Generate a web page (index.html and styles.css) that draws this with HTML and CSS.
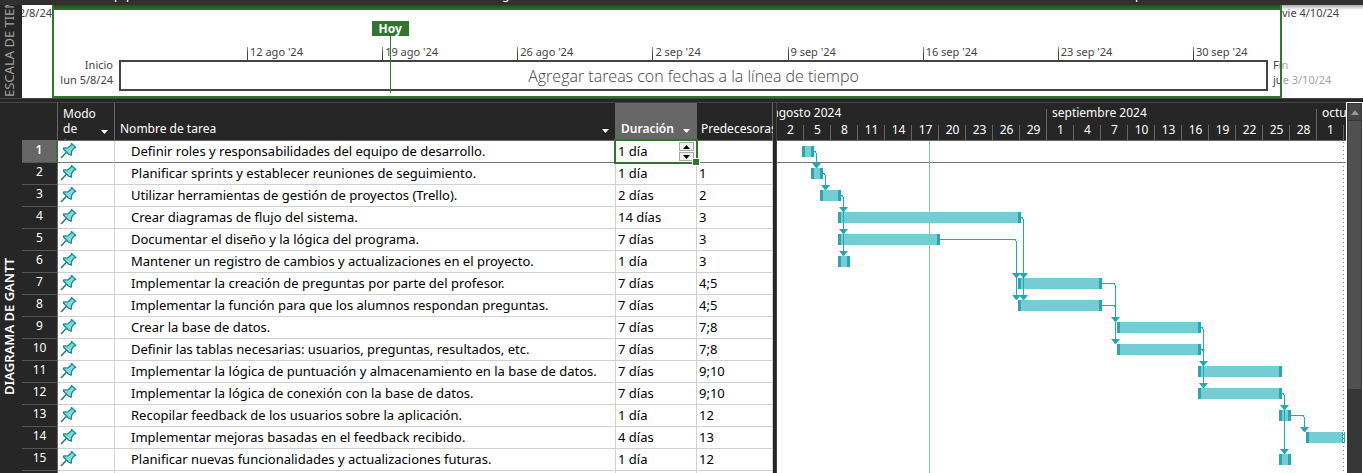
FILE: index.html
```
<!DOCTYPE html>
<html lang="es">
<head>
<meta charset="utf-8">
<title>Diagrama de Gantt</title>
<link rel="stylesheet" href="styles.css">
</head>
<body>
<svg class="defs" width="0" height="0" aria-hidden="true">
  <symbol id="pin" viewBox="0 0 17 17">
    <path d="M1 16 6.2 10.4" fill="none" stroke="#14838c" stroke-width="1.5"/>
    <path d="M11.5 1.5 15.8 5.4 13.8 6.2 11.6 9.3 11.2 13.3 8.7 12.2 3.4 7 3.8 5.8 7.6 6 11 3.2Z" fill="#7fdcdc" stroke="#14838c" stroke-width="1.2" stroke-linejoin="round"/>
  </symbol>
  <symbol id="caret" viewBox="0 0 7 4"><path d="M0 0H7L3.500 4Z" fill="#fff"/></symbol>
  <marker id="arrow" viewBox="0 0 9 5" refX="4.500" refY="4" markerWidth="9" markerHeight="5" markerUnits="userSpaceOnUse"><path d="M0 0H9L5 5H4Z" fill="#1aacb9"/></marker>
</svg>
<header class="ribbon"><span class="r1">p</span><span class="r2">p</span><span class="r3">g</span><span class="r4">p</span></header>

<section class="timeline">
  <h2 class="rail rail-dim">ESCALA DE TIEMPO</h2>
  <div class="outside before">2/8/24</div>
  <div class="frame">
    <div class="edge start">Inicio<br>lun 5/8/24</div>
    <div class="scale">
      <div class="weeks">
        <span>12 ago '24</span><span>19 ago '24</span><span>26 ago '24</span><span>2 sep '24</span><span>9 sep '24</span><span>16 sep '24</span><span>23 sep '24</span><span class="last">30 sep '24</span>
      </div>
      <div class="drop">Agregar tareas con fechas a la línea de tiempo</div>
      <div class="today"><b>Hoy</b><i></i></div>
    </div>
    <div class="edge end">Fin<br>jue 3/10/24</div>
  </div>
  <div class="outside after">vie 4/10/24</div>
</section>
<div class="splitter"></div>

<main class="gantt">
  <h2 class="rail rail-main">DIAGRAMA DE GANTT</h2>
  <table class="tasks">
    <colgroup><col class="c-id"><col class="c-mode"><col class="c-name"><col class="c-dur"><col class="c-pred"></colgroup>
    <thead>
      <tr>
        <th></th>
        <th><div class="head tall"><span>Modo de tarea</span><svg class="caret"><use href="#caret"/></svg></div></th>
        <th><div class="head"><span>Nombre de tarea</span><svg class="caret"><use href="#caret"/></svg></div></th>
        <th class="picked"><div class="head"><span>Duración</span><svg class="caret"><use href="#caret"/></svg></div></th>
        <th><div class="head"><span>Predecesoras</span></div></th>
      </tr>
    </thead>
    <tbody>
      <tr class="current"><th>1</th><td><svg class="pin"><use href="#pin"/></svg></td><td>Definir roles y responsabilidades del equipo de desarrollo.</td><td class="editing"><div class="editor"><input type="text" value="1 día" aria-label="Duración"><div class="spin"><button aria-label="Aumentar"><svg width="7" height="4"><path d="M0 4 3.500 0 7 4Z"/></svg></button><button aria-label="Disminuir"><svg width="7" height="4"><path d="M0 0H7L3.500 4Z"/></svg></button></div></div></td><td></td></tr>
      <tr><th>2</th><td><svg class="pin"><use href="#pin"/></svg></td><td>Planificar sprints y establecer reuniones de seguimiento.</td><td>1 día</td><td>1</td></tr>
      <tr><th>3</th><td><svg class="pin"><use href="#pin"/></svg></td><td>Utilizar herramientas de gestión de proyectos (Trello).</td><td>2 días</td><td>2</td></tr>
      <tr><th>4</th><td><svg class="pin"><use href="#pin"/></svg></td><td>Crear diagramas de flujo del sistema.</td><td>14 días</td><td>3</td></tr>
      <tr><th>5</th><td><svg class="pin"><use href="#pin"/></svg></td><td>Documentar el diseño y la lógica del programa.</td><td>7 días</td><td>3</td></tr>
      <tr><th>6</th><td><svg class="pin"><use href="#pin"/></svg></td><td>Mantener un registro de cambios y actualizaciones en el proyecto.</td><td>1 día</td><td>3</td></tr>
      <tr><th>7</th><td><svg class="pin"><use href="#pin"/></svg></td><td>Implementar la creación de preguntas por parte del profesor.</td><td>7 días</td><td>4;5</td></tr>
      <tr><th>8</th><td><svg class="pin"><use href="#pin"/></svg></td><td>Implementar la función para que los alumnos respondan preguntas.</td><td>7 días</td><td>4;5</td></tr>
      <tr><th>9</th><td><svg class="pin"><use href="#pin"/></svg></td><td>Crear la base de datos.</td><td>7 días</td><td>7;8</td></tr>
      <tr><th>10</th><td><svg class="pin"><use href="#pin"/></svg></td><td>Definir las tablas necesarias: usuarios, preguntas, resultados, etc.</td><td>7 días</td><td>7;8</td></tr>
      <tr><th>11</th><td><svg class="pin"><use href="#pin"/></svg></td><td>Implementar la lógica de puntuación y almacenamiento en la base de datos.</td><td>7 días</td><td>9;10</td></tr>
      <tr><th>12</th><td><svg class="pin"><use href="#pin"/></svg></td><td>Implementar la lógica de conexión con la base de datos.</td><td>7 días</td><td>9;10</td></tr>
      <tr><th>13</th><td><svg class="pin"><use href="#pin"/></svg></td><td>Recopilar feedback de los usuarios sobre la aplicación.</td><td>1 día</td><td>12</td></tr>
      <tr><th>14</th><td><svg class="pin"><use href="#pin"/></svg></td><td>Implementar mejoras basadas en el feedback recibido.</td><td>4 días</td><td>13</td></tr>
      <tr><th>15</th><td><svg class="pin"><use href="#pin"/></svg></td><td>Planificar nuevas funcionalidades y actualizaciones futuras.</td><td>1 día</td><td>12</td></tr>
      <tr><th></th><td></td><td></td><td></td><td></td></tr>
    </tbody>
  </table>

  <div class="chart">
    <div class="calendar">
      <div class="months"><span class="ago">agosto 2024</span><span class="sep">septiembre 2024</span><span class="oct">octubre 2024</span></div>
      <div class="days"><span>2</span><span>5</span><span>8</span><span>11</span><span>14</span><span>17</span><span>20</span><span>23</span><span>26</span><span class="eom">29</span><span>1</span><span>4</span><span>7</span><span>10</span><span>13</span><span>16</span><span>19</span><span>22</span><span>25</span><span class="eom">28</span><span>1</span></div>
    </div>
    <svg class="bars" role="img" aria-label="Barras de tareas" shape-rendering="crispEdges">
      <path d="M0 21.500H569" stroke="#777"/>
      <path d="M152.500 0V332" stroke="#8fc18f"/>
      <g fill="#74cdd4">
        <path d="M25 5h12v11h-12zM34 27h12v11h-12zM43 49h21v11h-21zM61 71h183v11h-183zM61 93h102v11h-102zM61 115h12v11h-12zM241 137h84v11h-84zM241 159h84v11h-84zM340 181h84v11h-84zM340 203h84v11h-84zM421 225h84v11h-84zM421 247h84v11h-84zM502 269h12v11h-12zM529 291h38v11h-38zM502 313h12v11h-12z"/>
      </g>
      <g fill="#2ba5b0">
        <path d="M25 5h3v11h-3zM34 5h3v11h-3zM34 27h3v11h-3zM43 27h3v11h-3zM43 49h3v11h-3zM61 49h3v11h-3zM61 71h3v11h-3zM241 71h3v11h-3zM61 93h3v11h-3zM160 93h3v11h-3zM61 115h3v11h-3zM70 115h3v11h-3zM241 137h3v11h-3zM322 137h3v11h-3zM241 159h3v11h-3zM322 159h3v11h-3zM340 181h3v11h-3zM421 181h3v11h-3zM340 203h3v11h-3zM421 203h3v11h-3zM421 225h3v11h-3zM502 225h3v11h-3zM421 247h3v11h-3zM502 247h3v11h-3zM502 269h3v11h-3zM511 269h3v11h-3zM529 291h3v11h-3zM565 291h1v11h-1zM567 291h1v11h-1zM502 313h3v11h-3zM511 313h3v11h-3z"/>
      </g>
      <path d="M566.500 291V302" stroke="#fff"/>
      <path d="M566.500 1V332" stroke="#777" stroke-dasharray="1 3"/>
      <g class="links" fill="none" stroke="#1aacb9">
        <path d="M37 10.500h1l1.500 2V26"/>
        <path d="M46 32.500h1l1.500 2V48"/>
        <path d="M64 54.500h1l1.500 2V70"/>
        <path d="M66.500 70V92"/>
        <path d="M66.500 92V114"/>
        <path d="M244 76.500h1l1.500 2V136"/>
        <path d="M246.500 136V158"/>
        <path d="M163 98.500h75l1.500 2V136"/>
        <path d="M239.500 136V158"/>
        <path d="M325 142.500h12l1.500 2V180"/>
        <path d="M325 164.500h12l1.500 2V202"/>
        <path d="M424 186.500h1l1.500 2V224"/>
        <path d="M424 208.500h1l1.500 2V246"/>
        <path d="M505 252.500h1l1.500 2V268"/>
        <path d="M507.500 268V312"/>
        <path d="M514 274.500h12l1.500 2V290"/>
      </g>
    </svg>
  </div>
  <div class="scroll">
    <button class="up" aria-label="Subir"><svg width="8" height="5"><path d="M0 5 4 0 8 5Z" fill="#999"/></svg></button>
    <div class="thumb"></div>
  </div>
</main>
</body>
</html>
```
FILE: styles.css
```
* { box-sizing: border-box; }
body {
  margin: 0;
  height: 100vh;
  display: flex;
  flex-direction: column;
  overflow: hidden;
  background: #262626;
  color: #fff;
  font: 12px/16px "Noto Sans", sans-serif;
}
.defs { position: absolute; }
button { padding: 0; border: 0; }

.ribbon {
  flex: none;
  height: 5px;
  padding-bottom: 4px;
  overflow: hidden;
  display: flex;
  align-items: flex-end;
  background: #32302f;
  line-height: 12px;
}
.ribbon span { flex: none; width: 8px; }
.r1 { margin-left: 114px; }
.r2 { margin-left: 4px; }
.r3 { margin-left: 368px; }
.r4 { margin-left: 625px; }

.rail {
  flex: none;
  width: 22px;
  margin: 0;
  overflow: hidden;
  background: #262626;
  writing-mode: vertical-rl;
  transform: rotate(180deg);
  font-size: 13px;
  line-height: 19px;
  white-space: nowrap;
}
.rail-dim { color: #a0a0a0; font-weight: 400; padding-top: 1px; }
.rail-main { font-weight: 600; text-align: right; padding-bottom: 155px; }

.timeline {
  flex: none;
  height: 93px;
  display: flex;
  position: relative;
  background: #fff;
  color: #444;
  font-size: 11px;
  line-height: 15px;
}
.outside { flex: none; overflow: hidden; white-space: nowrap; }
.before { width: 30px; display: flex; justify-content: flex-end; }
.after {
  width: 81px;
  position: relative;
  z-index: 2;
  background: linear-gradient(#aaa, rgba(255,255,255,.5) 5px);
}
.frame {
  flex: 1;
  display: flex;
  position: relative;
  padding: 42px 2px 0;
}
.frame::after {
  content: "";
  position: absolute;
  inset: 0;
  border: 2px solid #31752f;
  border-top: 0;
  background: linear-gradient(#244a22, #31752f) no-repeat 0 0 / 100% 5px;
  pointer-events: none;
}
.edge { flex: none; white-space: nowrap; padding-top: 10px; }
.start { width: 59px; margin-right: 6px; text-align: right; }
.end { width: 7px; margin-left: 5px; }
.scale { flex: 1; position: relative; }
.weeks { display: flex; height: 13px; padding-left: 128px; }
.weeks span {
  flex: 110 1 0;
  min-width: 0;
  padding-left: 3px;
  white-space: nowrap;
  line-height: 9px;
  background: linear-gradient(#999, #444 6px) no-repeat 0 0 / 1px 100%;
}
.weeks .last { flex-grow: 60; }
.drop {
  height: 31px;
  border: 2px solid #444;
  text-align: center;
  font: 300 16px/28px "Open Sans", sans-serif;
}
.today {
  position: absolute;
  top: -26px;
  bottom: 5px;
  left: 22%;
  width: 37px;
  display: flex;
  flex-direction: column;
  align-items: center;
}
.today b {
  width: 100%;
  background: #31752f;
  color: #fff;
  text-align: center;
  font-size: 12px;
  line-height: 15px;
}
.today i { flex: 1; width: 1px; background: #31752f; }

.splitter {
  flex: none;
  height: 5px;
  border: 1px solid #444;
  border-width: 1px 0;
}

.gantt { flex: 1; min-height: 0; display: flex; }
.gantt > * { overflow: hidden; }

.tasks {
  flex: none;
  width: 751px;
  align-self: flex-start;
  table-layout: fixed;
  border-collapse: separate;
  border-spacing: 0;
}
.c-id { width: 36px; }
.c-mode { width: 57px; }
.c-name { width: 501px; }
.c-dur { width: 81px; }
.c-pred { width: 76px; }
.tasks th, .tasks td { padding: 0; text-align: left; font-weight: 400; }
.tasks thead th {
  height: 38px;
  border-right: 1px solid #666;
  border-bottom: 1px solid #666;
}
.tasks thead .picked { background: #666; font-weight: 600; }
.head {
  display: flex;
  align-items: flex-end;
  justify-content: space-between;
  height: 37px;
  padding: 0 0 3px 5px;
}
.head.tall { align-items: flex-start; padding: 3px 0 0 5px; line-height: 15px; overflow: hidden; }
.head.tall span { width: 36px; }
.head.tall .caret { margin-top: 24px; }
.caret { flex: none; width: 7px; height: 4px; margin: 0 6px 4px 0; }
.tasks thead th:last-child .head { padding-left: 4px; }

.tasks tbody th {
  height: 22px;
  border-right: 1px solid #666;
  border-bottom: 1px solid #555;
  text-align: center;
  line-height: 18px;
  padding-bottom: 3px;
}
.tasks tbody td {
  height: 22px;
  background: #fff;
  color: #000;
  border-right: 1px solid #d0d0d0;
  border-bottom: 1px solid #d0d0d0;
  font-size: 13px;
  line-height: 18px;
  padding: 0 0 2px 2px;
  white-space: nowrap;
}
.tasks tbody td:nth-child(3) { padding-left: 16px; }
.tasks .current th { background: #666; border-right: 2px solid #31752f; font-weight: 600; }
.tasks .current td { border-bottom-color: #777; }
.pin { display: block; width: 17px; height: 17px; }
.tasks .editing { position: relative; padding-bottom: 0; }
.editing::before {
  content: "";
  position: absolute;
  inset: -2px;
  border: 2px solid #31752f;
}
.editing::after {
  content: "";
  position: absolute;
  right: -3px;
  bottom: -3px;
  width: 6px;
  height: 6px;
  background: #31752f;
  outline: 1px solid #fff;
}
.editor { position: relative; display: flex; align-items: center; height: 20px; }
.editor input {
  flex: 1;
  min-width: 0;
  height: 20px;
  padding: 0 0 2px;
  border: 0;
  outline: 0;
  background: none;
  color: #000;
  font: 13px/18px "Noto Sans", sans-serif;
}
.spin { width: 15px; margin-right: 2px; display: grid; gap: 1px; }
.spin button {
  height: 9px;
  display: grid;
  place-items: center;
  background: #f0f0f0;
  border: 1px solid #aaa;
}

.chart {
  flex: 1;
  min-width: 0;
  display: flex;
  flex-direction: column;
  margin-left: 3px;
  border-left: 1px solid #444;
}
.calendar {
  flex: none;
  height: 38px;
  overflow: hidden;
  border-bottom: 1px solid #666;
}
.months, .days { display: flex; white-space: nowrap; }
.months { height: 22px; }
.months span { flex: none; padding: 2px 0 0 5px; background: linear-gradient(#666, #666) no-repeat 100% 6px / 1px 16px; }
.ago { width: 270px; }
.months .ago { padding-left: 0; text-indent: -5px; }
.sep { width: 270px; }
.months .oct { background: none; }
.days { height: 15px; }
.days span {
  flex: none;
  width: 27px;
  line-height: 9px;
  text-align: center;
  background: linear-gradient(#666, #666) no-repeat 100% 0 / 1px 100%;
}
.bars { flex: 1; width: 100%; min-height: 0; background: #fff; }
.links path { marker-end: url(#arrow); }

.scroll {
  flex: none;
  width: 17px;
  border: 1px solid #fff;
  border-bottom: 0;
  margin-top: -1px;
  display: flex;
  flex-direction: column;
  gap: 1px;
  background: #363636;
}
.up { height: 16px; margin: 1px 1px 0; background: #464646; display: grid; place-items: center; }
.thumb { height: 268px; margin: 0 1px; background: #505050; }
```
